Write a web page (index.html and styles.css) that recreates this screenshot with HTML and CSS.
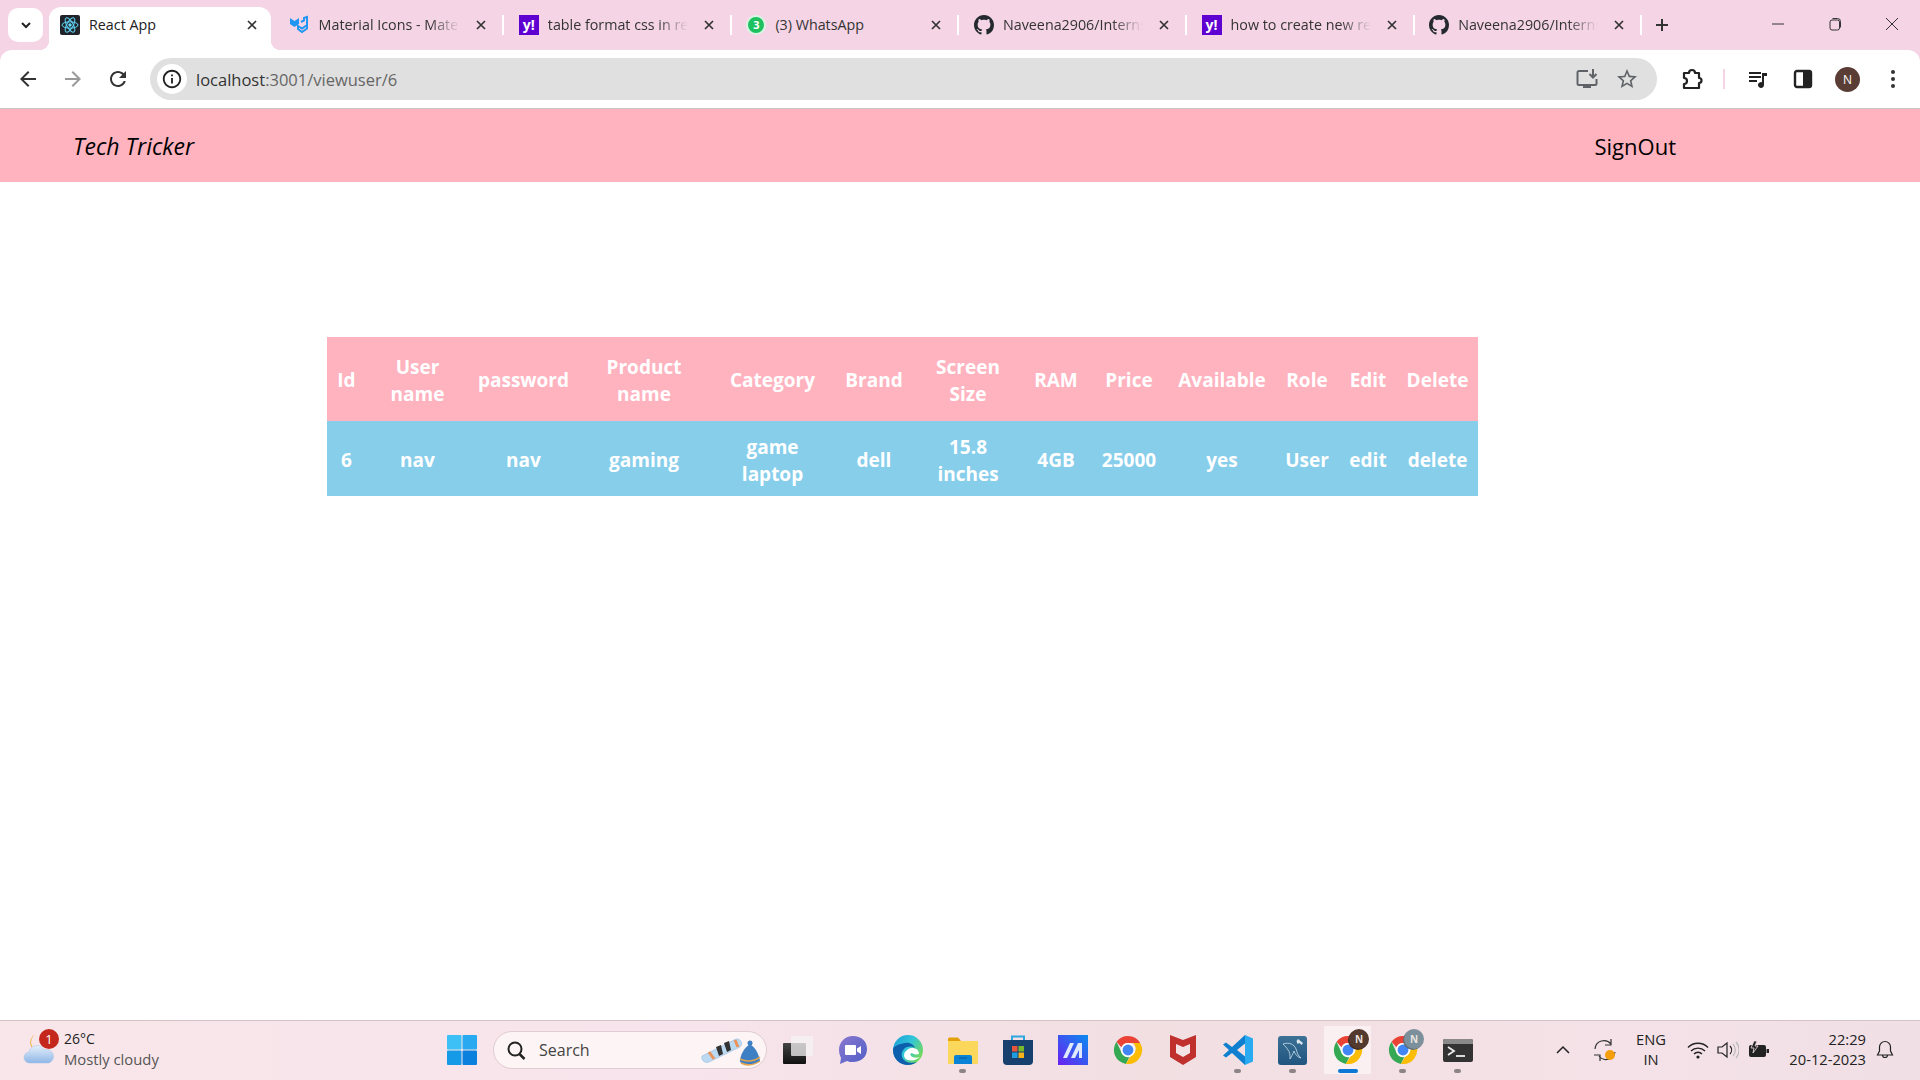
FILE: index.html
```html
<!DOCTYPE html>
<html lang="en">
<head>
    <meta charset="UTF-8" />
    <title>React App</title>
    <link rel="stylesheet" href="styles.css">
</head>
<body>
    <svg class="defs" width="0" height="0">
        <symbol id="github" viewBox="0 0 16 16">
            <path fill="#24292f" d="M8 0C3.58 0 0 3.58 0 8c0 3.54 2.29 6.53 5.47 7.59.4.07.55-.17.55-.38 0-.19-.01-.82-.01-1.49-2.01.37-2.53-.49-2.69-.94-.09-.23-.48-.94-.82-1.13-.28-.15-.68-.52-.01-.53.63-.01 1.08.58 1.23.82.72 1.21 1.87.87 2.33.66.07-.52.28-.87.51-1.07-1.78-.2-3.64-.89-3.64-3.95 0-.87.31-1.59.82-2.15-.08-.2-.36-1.02.08-2.12 0 0 .67-.21 2.2.82.64-.18 1.32-.27 2-.27.68 0 1.36.09 2 .27 1.53-1.04 2.2-.82 2.2-.82.44 1.1.16 1.92.08 2.12.51.56.82 1.27.82 2.15 0 3.07-1.87 3.75-3.65 3.95.29.25.54.73.54 1.48 0 1.07-.01 1.93-.01 2.2 0 .21.15.46.55.38A8.013 8.013 0 0016 8c0-4.42-3.58-8-8-8z"/>
        </symbol>
        <symbol id="close" viewBox="0 0 12 12">
            <path d="M2 2l8 8M10 2l-8 8" stroke="#333" stroke-width="1.7" fill="none"/>
        </symbol>
        <symbol id="chrome" viewBox="0 0 32 32">
            <path fill="#ea4335" d="M16 1a15 15 0 0 1 13 7.5H16a7.5 7.5 0 0 0-7 4.6L3.8 7.2A15 15 0 0 1 16 1z"/>
            <path fill="#34a853" d="M3.8 7.2L9.5 19.8a7.5 7.5 0 0 0 8 3.6L13.7 30.8A15 15 0 0 1 3.8 7.2z"/>
            <path fill="#fbbc04" d="M29 8.5a15 15 0 0 1-15.3 22.3l5.800-9.400a7.5 7.5 0 0 0 2-12.900z"/>
            <circle cx="16" cy="16" r="7.5" fill="#fff"/>
            <circle cx="16" cy="16" r="5.8" fill="#4285f4"/>
        </symbol>
    </svg>

    <div class="tab-strip">
        <button class="tab-search">
            <svg width="14" height="14" viewBox="0 0 14 14"><path d="M3 5l4 4 4-4" stroke="#222" stroke-width="2" fill="none"/></svg>
        </button>
        <div class="tab active">
            <svg class="favicon" viewBox="0 0 20 20">
                <rect width="20" height="20" rx="2" fill="#20232a"/>
                <g fill="none" stroke="#61dafb" stroke-width="1">
                    <ellipse cx="10" cy="10" rx="8" ry="3.2"/>
                    <ellipse cx="10" cy="10" rx="8" ry="3.2" transform="rotate(60 10 10)"/>
                    <ellipse cx="10" cy="10" rx="8" ry="3.2" transform="rotate(120 10 10)"/>
                </g>
                <circle cx="10" cy="10" r="1.7" fill="#61dafb"/>
            </svg>
            <span class="tab-title">React App</span>
            <svg class="tab-close"><use href="#close"/></svg>
        </div>
        <div class="tab tab-near">
            <svg class="favicon" viewBox="0 0 20 20">
                <path d="M1 3l4.5 3L10 3v6l-4.5 3L1 9z" fill="#2196f3"/>
                <path d="M12 7l3-1.5V3l3-1v8l-5 3.5-4-2.5v3l4 3 5-3.5v-3" fill="none" stroke="#2196f3" stroke-width="2"/>
            </svg>
            <span class="tab-title fade">Material Icons - Mate</span>
            <svg class="tab-close"><use href="#close"/></svg>
        </div>
        <div class="tab">
            <div class="favicon yahoo">y!</div>
            <span class="tab-title fade">table format css in rea</span>
            <svg class="tab-close"><use href="#close"/></svg>
        </div>
        <div class="tab">
            <div class="favicon whatsapp">3</div>
            <span class="tab-title">(3) WhatsApp</span>
            <svg class="tab-close"><use href="#close"/></svg>
        </div>
        <div class="tab">
            <svg class="favicon"><use href="#github"/></svg>
            <span class="tab-title fade">Naveena2906/Interns</span>
            <svg class="tab-close"><use href="#close"/></svg>
        </div>
        <div class="tab">
            <div class="favicon yahoo">y!</div>
            <span class="tab-title fade">how to create new re</span>
            <svg class="tab-close"><use href="#close"/></svg>
        </div>
        <div class="tab">
            <svg class="favicon"><use href="#github"/></svg>
            <span class="tab-title fade">Naveena2906/Interns</span>
            <svg class="tab-close"><use href="#close"/></svg>
        </div>
        <div class="new-tab">
            <svg width="14" height="14" viewBox="0 0 14 14"><path d="M7 1v12M1 7h12" stroke="#333" stroke-width="2"/></svg>
        </div>
        <div class="window-controls">
            <div class="win-btn"><svg width="14" height="14" viewBox="0 0 14 14"><path d="M1 7h12" stroke="#333"/></svg></div>
            <div class="win-btn"><svg width="14" height="14" viewBox="0 0 14 14"><rect x="2" y="3" width="9.5" height="10" rx="2" fill="none" stroke="#333"/><path d="M4.5 1.5h5a3 3 0 0 1 3 3v6" fill="none" stroke="#333"/></svg></div>
            <div class="win-btn"><svg width="14" height="14" viewBox="0 0 14 14"><path d="M1 1l12 12M13 1L1 13" stroke="#333"/></svg></div>
        </div>
    </div>

    <div class="toolbar">
        <div class="tool-btn"><svg width="24" height="24" viewBox="0 0 24 24"><path fill="#333" d="M20 11H7.83l5.59-5.59L12 4l-8 8 8 8 1.41-1.41L7.83 13H20v-2z"/></svg></div>
        <div class="tool-btn"><svg width="24" height="24" viewBox="0 0 24 24"><path fill="#999" d="M12 4l-1.41 1.41L16.17 11H4v2h12.17l-5.58 5.59L12 20l8-8z"/></svg></div>
        <div class="tool-btn"><svg width="24" height="24" viewBox="0 0 24 24"><path fill="#333" d="M17.65 6.35C16.2 4.9 14.21 4 12 4c-4.42 0-7.99 3.58-7.99 8s3.57 8 7.99 8c3.73 0 6.84-2.55 7.73-6h-2.08c-.82 2.33-3.04 4-5.65 4-3.31 0-6-2.69-6-6s2.69-6 6-6c1.66 0 3.14.69 4.22 1.78L13 11h7V4l-2.35 2.35z"/></svg></div>
        <div class="omnibox">
            <div class="site-info">
                <svg width="22" height="22" viewBox="0 0 24 24"><path fill="#222" d="M11 7h2v2h-2zm0 4h2v6h-2zm1-9C6.48 2 2 6.48 2 12s4.48 10 10 10 10-4.48 10-10S17.52 2 12 2zm0 18c-4.41 0-8-3.59-8-8s3.59-8 8-8 8 3.59 8 8-3.59 8-8 8z"/></svg>
            </div>
            <div class="url">localhost<span class="url-rest">:3001/viewuser/6</span></div>
            <svg class="omni-install" width="24" height="24" viewBox="0 0 24 24">
                <path d="M13 4H4a1.5 1.5 0 0 0-1.5 1.5v11A1.5 1.5 0 0 0 4 18h16a1.5 1.5 0 0 0 1.5-1.5V12" fill="none" stroke="#5f6368" stroke-width="2"/>
                <path d="M8 18h8v3H8z" fill="#5f6368"/>
                <path d="M18 2v8M14.5 7l3.5 3.5L21.5 7" fill="none" stroke="#5f6368" stroke-width="2"/>
            </svg>
            <svg class="omni-star" width="24" height="24" viewBox="0 0 24 24"><path fill="#5f6368" d="M22 9.24l-7.19-.62L12 2 9.19 8.63 2 9.24l5.46 4.73L5.82 21 12 17.27 18.18 21l-1.63-7.03L22 9.24zM12 15.4l-3.76 2.27 1-4.28-3.32-2.88 4.38-.38L12 6.1l1.71 4.04 4.38.38-3.32 2.88 1 4.28L12 15.4z"/></svg>
        </div>
        <div class="tool-btn ext"><svg width="24" height="24" viewBox="0 0 24 24"><path fill="none" stroke="#222" stroke-width="2.2" stroke-linejoin="round" d="M4 6h5a3 3 0 0 1 6 0h4v5a2.5 2.5 0 0 1 0 5v5H4v-4a3 3 0 0 0 0-6z"/></svg></div>
        <div class="tool-sep"></div>
        <div class="tool-btn"><svg width="24" height="24" viewBox="0 0 24 24"><path d="M3 6h12M3 10h12M3 14h8" stroke="#222" stroke-width="2"/><path d="M16 6h5v3h-3v9a3 3 0 1 1-2-2.8z" fill="#222"/></svg></div>
        <div class="tool-btn"><svg width="24" height="24" viewBox="0 0 24 24"><rect x="4" y="4" width="16" height="16" rx="2" fill="none" stroke="#222" stroke-width="2.4"/><rect x="12" y="4" width="8" height="16" fill="#222"/></svg></div>
        <div class="tool-btn"><div class="avatar">N</div></div>
        <div class="tool-btn"><svg width="24" height="24" viewBox="0 0 24 24"><circle cx="12" cy="5" r="2" fill="#333"/><circle cx="12" cy="12" r="2" fill="#333"/><circle cx="12" cy="19" r="2" fill="#333"/></svg></div>
    </div>

    <header class="app-header">
        <div class="brand">Tech Tricker</div>
        <a class="signout">SignOut</a>
    </header>

    <main class="content">
        <table class="user-table">
            <colgroup>
                <col class="c-id"><col class="c-user"><col class="c-pass"><col class="c-product">
                <col class="c-category"><col class="c-brand"><col class="c-screen"><col class="c-ram">
                <col class="c-price"><col class="c-available"><col class="c-role"><col class="c-edit"><col class="c-delete">
            </colgroup>
            <thead>
                <tr>
                    <th>Id</th>
                    <th>User<br>name</th>
                    <th>password</th>
                    <th>Product<br>name</th>
                    <th>Category</th>
                    <th>Brand</th>
                    <th>Screen<br>Size</th>
                    <th>RAM</th>
                    <th>Price</th>
                    <th>Available</th>
                    <th>Role</th>
                    <th>Edit</th>
                    <th>Delete</th>
                </tr>
            </thead>
            <tbody>
                <tr>
                    <td>6</td>
                    <td>nav</td>
                    <td>nav</td>
                    <td>gaming</td>
                    <td>game<br>laptop</td>
                    <td>dell</td>
                    <td>15.8<br>inches</td>
                    <td>4GB</td>
                    <td>25000</td>
                    <td>yes</td>
                    <td>User</td>
                    <td>edit</td>
                    <td>delete</td>
                </tr>
            </tbody>
        </table>
    </main>

    <footer class="taskbar">
        <div class="weather">
            <div class="weather-icon">
                <svg width="36" height="36" viewBox="0 0 36 36">
                    <defs>
                        <linearGradient id="cloud-a" x1="0" y1="0" x2="0" y2="1"><stop offset="0" stop-color="#e4f0fb"/><stop offset="1" stop-color="#8fb6e6"/></linearGradient>
                    </defs>
                    <path d="M14 2A9 9 0 1 0 22 18 7.5 7.5 0 0 1 14 2z" fill="#f5b041"/>
                    <path d="M8 31a5.5 5.5 0 0 1-1-11 8 8 0 0 1 15-2 6.5 6.5 0 0 1 5 13z" fill="url(#cloud-a)" stroke="#a3c1e8" stroke-width="0.5"/>
                </svg>
                <div class="weather-badge">1</div>
            </div>
            <div class="weather-text">
                <div class="temp">26°C</div>
                <div class="sky">Mostly cloudy</div>
            </div>
        </div>

        <div class="task-group">
            <div class="task-icon">
                <svg width="30" height="30" viewBox="0 0 30 30">
                    <rect x="0" y="0" width="14.5" height="14.5" rx="1" fill="#3cc0f5"/>
                    <rect x="15.5" y="0" width="14.5" height="14.5" rx="1" fill="#29aaf0"/>
                    <rect x="0" y="15.5" width="14.5" height="14.5" rx="1" fill="#159ae8"/>
                    <rect x="15.5" y="15.5" width="14.5" height="14.5" rx="1" fill="#0b80dc"/>
                </svg>
            </div>
            <div class="search-box">
                <svg width="22" height="22" viewBox="0 0 22 22"><circle cx="10" cy="10" r="6.5" fill="none" stroke="#222" stroke-width="2"/><path d="M14.5 15l5 5" stroke="#222" stroke-width="2.5"/></svg>
                <span class="search-text">Search</span>
                <svg class="search-art" width="62" height="34" viewBox="0 0 62 34">
                    <path d="M1 23L33 7a4.5 4.5 0 0 1 6 7L8 29a5 5 0 0 1-7-6z" fill="#bcd9f2" stroke="#8fb6dc" stroke-width="0.5"/>
                    <path d="M8 19l5 7M34 7l3 7" stroke="#e9935a" stroke-width="3"/>
                    <path d="M15 14l3 9 4-2-2-9zM23 10l3 9 4-2-2-9z" fill="#333"/>
                    <circle cx="49" cy="10" r="2.5" fill="#3f7fc4"/>
                    <path d="M49 11c6 4 9 11 10 17-4 4-14 5-20 1 0-7 4-14 10-18z" fill="#3f7fc4"/>
                    <path d="M39 26c6 3 14 3 20-2M40 30c6 3 13 2 19-2" stroke="#e3a44c" stroke-width="1.5" fill="none"/>
                </svg>
            </div>
            <div class="task-icon">
                <svg width="30" height="28" viewBox="0 0 30 28">
                    <defs>
                        <linearGradient id="view-a" x1="0" y1="0" x2="0" y2="1"><stop offset="0" stop-color="#444"/><stop offset="1" stop-color="#111"/></linearGradient>
                    </defs>
                    <rect x="0" y="7" width="23" height="21" rx="1" fill="url(#view-a)"/>
                    <rect x="8" y="0" width="22" height="20" rx="1" fill="#f6f3f3" fill-opacity="0.75"/>
                </svg>
            </div>
            <div class="task-icon">
                <svg width="30" height="30" viewBox="0 0 30 30">
                    <defs>
                        <linearGradient id="teams-a" x1="0" y1="0" x2="1" y2="1"><stop offset="0" stop-color="#8a78cf"/><stop offset="1" stop-color="#4f5fc7"/></linearGradient>
                    </defs>
                    <path d="M15 1C7 1 1 7 1 15c0 3 1 6 2 8l-1 6 7-3c2 1 4 1 6 1 8 0 14-5 14-13S23 1 15 1z" fill="url(#teams-a)"/>
                    <path d="M8 10h9a1 1 0 0 1 1 1v8a1 1 0 0 1-1 1H8a1 1 0 0 1-1-1v-8a1 1 0 0 1 1-1zM19 13.500l4-2.500v8l-4-2.500z" fill="#fff"/>
                </svg>
            </div>
            <div class="task-icon">
                <svg width="30" height="30" viewBox="0 0 30 30">
                    <defs>
                        <linearGradient id="edge-a" x1="0" y1="0" x2="1" y2="0.6"><stop offset="0" stop-color="#1b9bd8"/><stop offset="0.55" stop-color="#32c6d8"/><stop offset="1" stop-color="#74d85c"/></linearGradient>
                    </defs>
                    <circle cx="15" cy="15" r="15" fill="url(#edge-a)"/>
                    <path d="M0 15C0 24 7 30 15 30c3 0 6-1 9-3-7 2-13 0-15-5-1-3 0-6 2-8 3-3 8-3 11-1-1-3-5-6-10-5C6 9 0 11 0 15z" fill="#0d5fae"/>
                    <path d="M12 17c-2 3-1 7 3 8 5 1 8 0 12-3-3 1-7 1-9-1-1-1-1-3 1-3 1 1 4 2 7 1 0-4-3-6-7-6-3 0-5 2-7 4z" fill="#fff"/>
                </svg>
            </div>
            <div class="task-icon has-dot">
                <svg width="30" height="27" viewBox="0 0 30 27">
                    <path d="M0 2a1.5 1.5 0 0 1 1.5-1.500H10L13 4H0z" fill="#e3a008"/>
                    <path d="M0 4h30v22a1 1 0 0 1-1 1H1a1 1 0 0 1-1-1z" fill="#fbd75b"/>
                    <path d="M8 18h14a2 2 0 0 1 2 2v7H6v-7a2 2 0 0 1 2-2z" fill="#0a83d6"/>
                    <path d="M11 21h8" stroke="#0a5ea0" stroke-width="1.2"/>
                </svg>
            </div>
            <div class="task-icon">
                <svg width="30" height="30" viewBox="0 0 30 30">
                    <path d="M9 6V1.500h12V6" fill="none" stroke="#2fa8e0" stroke-width="2"/>
                    <path d="M0 5h30v21a4 4 0 0 1-4 4H4a4 4 0 0 1-4-4z" fill="#17406f"/>
                    <rect x="9" y="11" width="5.5" height="5.5" fill="#e8553a"/>
                    <rect x="15.5" y="11" width="5.5" height="5.5" fill="#7ab82b"/>
                    <rect x="9" y="17.5" width="5.5" height="5.5" fill="#1f9de0"/>
                    <rect x="15.5" y="17.5" width="5.5" height="5.5" fill="#f8b21a"/>
                </svg>
            </div>
            <div class="task-icon">
                <svg width="30" height="30" viewBox="0 0 30 30">
                    <defs>
                        <linearGradient id="vector-a" x1="0" y1="1" x2="1" y2="0"><stop offset="0" stop-color="#6a1ff0"/><stop offset="1" stop-color="#0a8df0"/></linearGradient>
                    </defs>
                    <rect width="30" height="30" fill="url(#vector-a)"/>
                    <path d="M5 23l7-15h4L9 23zM13 23l7-15h4v15h-3v-8l-4 8z" fill="#dfe9fb"/>
                </svg>
            </div>
            <div class="task-icon"><svg width="30" height="30"><use href="#chrome"/></svg></div>
            <div class="task-icon">
                <svg width="26" height="30" viewBox="0 0 26 30">
                    <path d="M0 0l13 5 13-5v22l-13 8-13-8z" fill="#c0302d"/>
                    <path d="M6 9l7 3 7-3v9l-7 4-7-4z" fill="#f4e3e4"/>
                </svg>
            </div>
            <div class="task-icon has-dot">
                <svg width="30" height="30" viewBox="0 0 30 30">
                    <path d="M22 0L9 12 3 7.500 0 9.500 6 15l-6 5.500 3 2L9 18l13 12zM22 8.500L14 15l8 6.500z" fill="#0f7fd0" fill-rule="evenodd"/>
                    <path d="M22 0l8 3.500v23L22 30z" fill="#2aaaf0"/>
                </svg>
            </div>
            <div class="task-icon has-dot">
                <svg width="29" height="29" viewBox="0 0 29 29">
                    <defs>
                        <linearGradient id="mysql-a" x1="0" y1="0" x2="0" y2="1"><stop offset="0" stop-color="#3d7196"/><stop offset="1" stop-color="#1f557f"/></linearGradient>
                    </defs>
                    <rect width="29" height="29" rx="3" fill="url(#mysql-a)"/>
                    <path d="M5 8c6-2 11 0 13 5 1 3 2 7 5 9-4-1-6-4-7-7-1 3-3 6-4 8 0-4 0-7-2-9-1-2-3-4-5-6z" fill="none" stroke="#cfe0ec" stroke-width="0.8"/>
                    <path d="M20 3l5 4-1.500 2-2-2-2 1-1-3z" fill="#dbe7ef"/>
                </svg>
            </div>
            <div class="task-icon active-task">
                <svg width="30" height="30"><use href="#chrome"/></svg>
                <div class="profile-badge dark">N</div>
            </div>
            <div class="task-icon has-dot">
                <svg width="30" height="30"><use href="#chrome"/></svg>
                <div class="profile-badge grey">N</div>
            </div>
            <div class="task-icon has-dot">
                <svg width="30" height="23" viewBox="0 0 30 23">
                    <rect width="30" height="23" rx="2" fill="#333"/>
                    <path d="M2 0h26a2 2 0 0 1 2 2v3H0V2a2 2 0 0 1 2-2z" fill="#8a8a8a"/>
                    <path d="M5 8l6 4-6 4" fill="none" stroke="#eee" stroke-width="1.8"/>
                    <path d="M13 17h9" stroke="#eee" stroke-width="1.8"/>
                </svg>
            </div>
        </div>

        <div class="tray">
            <svg class="tray-chevron" width="16" height="16" viewBox="0 0 16 16"><path d="M2 11l6-6 6 6" fill="none" stroke="#222" stroke-width="1.5"/></svg>
            <svg class="tray-sync" width="24" height="24" viewBox="0 0 24 24">
                <path d="M2 11a9 9 0 0 1 16-5M18 1v6h-6M22 14a9 9 0 0 1-16 4M7 23v-6H1" fill="none" stroke="#333" stroke-width="1.2"/>
                <circle cx="17" cy="17" r="5" fill="#f59e0b"/>
            </svg>
            <div class="lang">ENG<br>IN</div>
            <svg class="tray-wifi" width="22" height="18" viewBox="0 0 22 18">
                <path d="M1 6.5a14 14 0 0 1 20 0M4 10a10 10 0 0 1 14 0M7 13a5.5 5.500 0 0 1 8 0" fill="none" stroke="#222" stroke-width="1.4"/>
                <circle cx="11" cy="16" r="1.6" fill="#222"/>
            </svg>
            <svg class="tray-sound" width="22" height="18" viewBox="0 0 22 18">
                <path d="M1 6h4l5-4v14l-5-4H1z" fill="none" stroke="#222" stroke-width="1.2"/>
                <path d="M13 5a6 6 0 0 1 0 8" fill="none" stroke="#222" stroke-width="1.2"/>
                <path d="M16 3a9 9 0 0 1 0 12M19 1a12 12 0 0 1 0 16" fill="none" stroke="#bbb" stroke-width="1.2"/>
            </svg>
            <svg class="tray-battery" width="22" height="18" viewBox="0 0 22 18">
                <rect x="1" y="4" width="17" height="12" rx="2" fill="#222"/>
                <rect x="18.5" y="8" width="2.5" height="4" fill="#222"/>
                <path d="M6 0L3 7h3l-1 5 5-7H7l2-5z" fill="#222" stroke="#f5e2e8" stroke-width="0.8"/>
            </svg>
            <div class="clock">22:29<br>20-12-2023</div>
            <svg class="tray-bell" width="18" height="20" viewBox="0 0 18 20">
                <path d="M9 1.500a5.500 5.500 0 0 0-5.500 5.500v4L1.500 15h15l-2-4V7A5.500 5.500 0 0 0 9 1.500zM6.500 15a2.500 2.500 0 0 0 5 0" fill="none" stroke="#222" stroke-width="1.2"/>
            </svg>
        </div>
    </footer>
</body>
</html>
```

FILE: styles.css
```css
* {
    box-sizing: border-box;
}

body {
    margin: 0;
    height: 100vh;
    overflow: hidden;
    display: flex;
    flex-direction: column;
    background-color: #f5d5e5;
    font-family: "Open Sans", "Noto Sans", sans-serif;
}

.defs {
    display: block;
    height: 0;
}

/* browser chrome */
.tab-strip {
    display: flex;
    align-items: flex-end;
    flex-shrink: 0;
    height: 50px;
    background-color: #f5d5e5;
}

.tab-search {
    width: 35px;
    height: 34px;
    margin: 0 6px 8px 8px;
    padding: 0;
    border: 0;
    border-radius: 10px;
    background-color: #fff;
    display: flex;
    justify-content: center;
    align-items: center;
}

.tab {
    position: relative;
    width: 227.6px;
    height: 43px;
    padding: 0 0 8px 14.6px;
    display: flex;
    align-items: center;
    flex-shrink: 0;
    font-size: 14.3px;
    color: #333;
}

.tab::after {
    content: "";
    width: 2px;
    height: 20px;
    margin-left: 15px;
    background-color: #fff;
}

.tab.active {
    width: 222px;
    margin-right: 5.6px;
    padding-left: 11px;
    background-color: #fff;
    border-radius: 12px 12px 0 0;
    color: #222;
}

.tab.active::before,
.tab.active::after {
    content: "";
    position: absolute;
    bottom: 0;
    width: 10px;
    height: 10px;
    margin: 0;
}

.tab.active::before {
    left: -10px;
    background: radial-gradient(circle at 0 0, transparent 10px, #fff 10.5px);
}

.tab.active::after {
    right: -10px;
    background: radial-gradient(circle at 100% 0, transparent 10px, #fff 10.5px);
}

.tab.active .tab-close {
    margin-left: 17px;
}

.tab-near {
    padding-left: 12px;
}

.tab-near .tab-title {
    width: 141.6px;
    margin-left: 10px;
}

.favicon {
    width: 20px;
    height: 20px;
    flex-shrink: 0;
}

.yahoo {
    background-color: #5f01d1;
    color: #fff;
    font-size: 14px;
    font-weight: bold;
    line-height: 19px;
    text-align: center;
}

.whatsapp {
    border-radius: 50%;
    background-color: #1ec15f;
    border: 2px solid #d8f5e3;
    color: #fff;
    font-size: 11px;
    font-weight: bold;
    line-height: 16px;
    text-align: center;
}

.tab-title {
    width: 140px;
    margin-left: 9px;
    white-space: nowrap;
    overflow: hidden;
    flex-shrink: 0;
}

.tab-title.fade {
    -webkit-mask-image: linear-gradient(90deg, #000 78%, transparent 100%);
    mask-image: linear-gradient(90deg, #000 78%, transparent 100%);
}

.tab-close {
    width: 12px;
    height: 12px;
    margin-left: 15px;
    flex-shrink: 0;
}

.new-tab {
    width: 40px;
    height: 43px;
    padding-bottom: 8px;
    display: flex;
    justify-content: center;
    align-items: center;
}

.window-controls {
    margin-left: auto;
    height: 50px;
    display: flex;
}

.win-btn {
    width: 57px;
    display: flex;
    justify-content: center;
    align-items: center;
    padding-bottom: 2px;
}

.toolbar {
    display: flex;
    align-items: center;
    flex-shrink: 0;
    height: 59px;
    padding-left: 5px;
    background-color: #fff;
    border-radius: 12px 12px 0 0;
    border-bottom: 1px solid #c8c8c8;
}

.tool-btn {
    width: 45px;
    height: 45px;
    display: flex;
    justify-content: center;
    align-items: center;
    flex-shrink: 0;
}

.omnibox {
    display: flex;
    align-items: center;
    width: 1507px;
    height: 42px;
    margin: 0 12px 0 10px;
    padding-left: 7px;
    border-radius: 21px;
    background-color: #e0e0e0;
    flex-shrink: 0;
}

.site-info {
    width: 30px;
    height: 30px;
    border-radius: 50%;
    background-color: #fff;
    display: flex;
    justify-content: center;
    align-items: center;
}

.url {
    margin-left: 9px;
    font-size: 16.5px;
    color: #333;
}

.url-rest {
    color: #666;
}

.omni-install {
    margin-left: auto;
}

.omni-star {
    margin: 0 18px 0 16px;
}

.tool-sep {
    width: 2px;
    height: 20px;
    margin: 0 10px 0 9px;
    background-color: #f5d5e5;
}

.avatar {
    width: 25px;
    height: 25px;
    border-radius: 50%;
    background-color: #5a3d34;
    color: #fff;
    font-size: 12px;
    line-height: 25px;
    text-align: center;
}

/* app */
.app-header {
    display: flex;
    justify-content: space-between;
    align-items: center;
    flex-shrink: 0;
    height: 73px;
    padding: 0 244px 0 73px;
    background-color: #ffb3bf;
    color: #000;
    font-size: 23px;
}

.brand {
    font-style: italic;
}

.signout {
    font-size: 22px;
}

.content {
    flex: 1;
    padding: 155px 0 0 327px;
    background-color: #fff;
}

.user-table {
    width: 1151px;
    table-layout: fixed;
    border-collapse: collapse;
    color: #fff;
    font-size: 19px;
    font-weight: bold;
    line-height: 27px;
    text-align: center;
}

.user-table thead {
    background-color: #ffb3bf;
}

.user-table tbody {
    background-color: #87ceeb;
}

.user-table th {
    padding: 16.5px 0 13.5px;
}

.user-table td {
    padding: 12.5px 0 8.5px;
}

.c-id { width: 39px; }
.c-user { width: 103px; }
.c-pass { width: 109px; }
.c-product { width: 132px; }
.c-category { width: 125px; }
.c-brand { width: 78px; }
.c-screen { width: 110px; }
.c-ram { width: 66px; }
.c-price { width: 80px; }
.c-available { width: 106px; }
.c-role { width: 64px; }
.c-edit { width: 58px; }
.c-delete { width: 81px; }

/* windows taskbar */
.taskbar {
    display: flex;
    align-items: center;
    flex-shrink: 0;
    height: 60px;
    padding-bottom: 1px;
    border-top: 1px solid #d3c3c8;
    background: linear-gradient(90deg, #f8e6ea 0%, #f8e4ec 35%, #f1dfe2 60%, #f4e2e8 85%, #f0dfe4 100%);
}

.weather {
    width: 434px;
    padding-left: 22px;
    display: flex;
    align-items: center;
    flex-shrink: 0;
}

.weather-icon {
    position: relative;
    width: 42px;
    height: 36px;
}

.weather-badge {
    position: absolute;
    top: -3px;
    left: 17px;
    width: 20px;
    height: 20px;
    border-radius: 50%;
    background-color: #c4281c;
    color: #fff;
    font-size: 13px;
    line-height: 20px;
    text-align: center;
}

.weather-text {
    font-size: 14.8px;
    line-height: 20px;
    color: #222;
    padding-bottom: 2px;
}

.temp {
    font-size: 14px;
}

.sky {
    color: #555;
}

.task-group {
    display: flex;
    align-items: center;
}

.task-icon {
    position: relative;
    width: 55px;
    height: 48px;
    display: flex;
    justify-content: center;
    align-items: center;
    flex-shrink: 0;
}

.has-dot::after {
    content: "";
    position: absolute;
    left: 24px;
    bottom: 1px;
    width: 7px;
    height: 4px;
    border-radius: 2px;
    background-color: #8d8488;
}

.active-task {
    background: linear-gradient(#faf0f2, #faf0f2) center / 47px 48px no-repeat;
}

.active-task::after {
    content: "";
    position: absolute;
    left: 18px;
    bottom: 1px;
    width: 20px;
    height: 4px;
    border-radius: 2px;
    background-color: #0a78d4;
}

.profile-badge {
    position: absolute;
    top: 3px;
    right: 6px;
    width: 20px;
    height: 20px;
    border-radius: 50%;
    color: #e9e2df;
    font-size: 10px;
    font-weight: bold;
    line-height: 20px;
    text-align: center;
}

.profile-badge.dark {
    background-color: #54392f;
    box-shadow: -1px 1px 0 #3b2820;
}

.profile-badge.grey {
    background-color: #7c909c;
    box-shadow: -1px 1px 0 #5b6b75;
}

.search-box {
    width: 274px;
    height: 38px;
    margin: 0 3px 0 4px;
    padding: 0 3px 0 11px;
    display: flex;
    align-items: center;
    border: 1px solid #e0ccd2;
    border-radius: 19px;
    background-color: #fcf4f5;
    flex-shrink: 0;
}

.search-text {
    margin-left: 12px;
    font-size: 16px;
    color: #444;
}

.search-art {
    margin-left: auto;
}

.tray {
    flex: 1;
    height: 100%;
    display: flex;
    align-items: center;
    font-size: 14.7px;
    line-height: 20.5px;
    color: #222;
}

.tray-chevron {
    margin-left: 70px;
}

.tray-sync {
    margin-left: 22px;
}

.lang {
    width: 40px;
    margin-left: 14px;
    text-align: center;
    padding-bottom: 2px;
}

.tray-wifi {
    margin-left: 15.5px;
}

.tray-sound {
    margin-left: 8.5px;
}

.tray-battery {
    margin-left: 9px;
}

.clock {
    width: 85px;
    margin-left: 11px;
    text-align: right;
    white-space: nowrap;
    padding-bottom: 2px;
}

.tray-bell {
    margin-left: 10px;
}
```
